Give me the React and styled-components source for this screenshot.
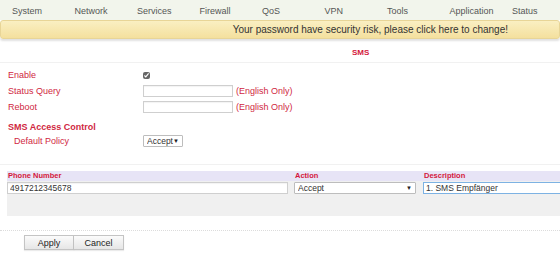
import React from "react";
import styled, { createGlobalStyle } from "styled-components";

const GlobalStyle = createGlobalStyle`
  html, body {
    margin: 0;
    padding: 0;
    background: #fff;
    font-family: "Liberation Sans", Arial, sans-serif;
  }
`;

const menu = ["System", "Network", "Services", "Firewall", "QoS", "VPN", "Tools", "Application", "Status"];

const Page = styled.div`
  width: 560px;
  height: 254px;
  overflow: hidden;
`;

const Nav = styled.div`
  display: flex;
  height: 20px;
  background: #f2f5ec;
`;

const NavItem = styled.div`
  flex: 0 0 62.5px;
  padding-left: 12px;
  box-sizing: border-box;
  font-size: 9px;
  line-height: 22px;
  color: #555;
  white-space: nowrap;
`;

const Banner = styled.div`
  height: 19px;
  box-sizing: border-box;
  background: linear-gradient(#faefc2, #f4e09e);
  border: 1px solid #e8d597;
  border-radius: 3px;
  box-shadow: 0 2px 2px rgba(0, 0, 0, 0.12);
  padding-right: 51px;
  text-align: right;
  font-size: 10px;
  line-height: 17px;
  color: #333;
`;

const Title = styled.div`
  margin-top: 5px;
  height: 18px;
  border-bottom: 1px solid #f1f1f1;
  padding-left: 352px;
  font-size: 8px;
  font-weight: bold;
  line-height: 18px;
  color: #d4173c;
`;

const Form = styled.div`
  padding: 4px 0 0 8px;
  height: 97px;
  border-bottom: 1px solid #f1f1f1;
`;

const Row = styled.div`
  display: flex;
  align-items: center;
  height: ${p => p.$h || 16}px;
  margin-top: ${p => p.$mt || 0}px;
`;

const Label = styled.div`
  width: ${p => (p.$indent ? 129 : 135)}px;
  padding-left: ${p => (p.$indent ? 6 : 0)}px;
  font-size: 9px;
  color: #d0283f;
  font-weight: ${p => (p.$bold ? "bold" : "normal")};
  white-space: nowrap;
`;

const Check = styled.input`
  width: 7px;
  height: 7px;
  margin: 0;
  accent-color: #666;
`;

const TextInput = styled.input`
  display: block;
  box-sizing: border-box;
  width: ${p => p.$w}px;
  height: 12px;
  margin: 0;
  padding: 0 2px;
  border: 1px solid ${p => (p.$focus ? "#7db2e3" : "#cfcfcf")};
  box-shadow: ${p => (p.$focus ? "0 0 2px rgba(80,150,220,0.4)" : "inset 0 1px 1px rgba(0,0,0,0.05)")};
  font-family: "Liberation Sans", Arial, sans-serif;
  font-size: 8.5px;
  color: #333;
  outline: none;
  background: #fff;
`;

const Hint = styled.span`
  margin-left: 3px;
  font-size: 9px;
  color: #d0283f;
`;

const SelectWrap = styled.div`
  position: relative;
  width: ${p => p.$w}px;
  height: 12px;
`;

const Select = styled.select`
  display: block;
  appearance: none;
  box-sizing: border-box;
  width: 100%;
  height: 12px;
  margin: 0;
  padding: 0 0 0 3px;
  border: 1px solid #bdbdbd;
  border-radius: 1px;
  background: #fff;
  font-family: "Liberation Sans", Arial, sans-serif;
  font-size: 8.5px;
  line-height: 10px;
  color: #333;
`;

const Arrow = styled.span`
  position: absolute;
  right: 4px;
  top: 0;
  font-size: 6px;
  line-height: 12px;
  color: #222;
  pointer-events: none;
`;

const Table = styled.div`
  margin: 6px 0 0 7px;
  background: #f0f0f0;
  height: 45px;
`;

const HeadRow = styled.div`
  display: grid;
  grid-template-columns: 287px 129px 1fr;
  background: #e7e4f6;
  height: 10px;
`;

const HeadCell = styled.div`
  padding-left: 1px;
  font-size: 7.5px;
  font-weight: bold;
  line-height: 10px;
  color: #d4173c;
`;

const BodyRow = styled.div`
  display: grid;
  grid-template-columns: 287px 129px 1fr;
  padding-top: 1px;
`;

const Cell = styled.div`
  overflow: hidden;
`;

const Dotted = styled.div`
  margin-top: 14px;
  border-top: 1px dotted #dcdcdc;
`;

const Buttons = styled.div`
  display: flex;
  padding: 4px 0 0 24px;
`;

const Button = styled.button`
  width: 50px;
  height: 15px;
  margin: 0;
  padding: 0;
  border: 1px solid #c4c4c4;
  border-left-width: ${p => (p.$joined ? 0 : 1)}px;
  background: linear-gradient(#fbfbfb, #e6e6e6);
  font-family: "Liberation Sans", Arial, sans-serif;
  font-size: 9px;
  color: #222;
  box-shadow: 0 1px 1px rgba(0, 0, 0, 0.08);
`;

export default function App() {
  return (
    <Page>
      <GlobalStyle />
      <Nav>
        {menu.map(m => (
          <NavItem key={m}>{m}</NavItem>
        ))}
      </Nav>
      <Banner>Your password have security risk, please click here to change!</Banner>
      <Title>SMS</Title>
      <Form>
        <Row>
          <Label>Enable</Label>
          <Check type="checkbox" defaultChecked />
        </Row>
        <Row>
          <Label>Status Query</Label>
          <TextInput $w={90} />
          <Hint>(English Only)</Hint>
        </Row>
        <Row>
          <Label>Reboot</Label>
          <TextInput $w={90} />
          <Hint>(English Only)</Hint>
        </Row>
        <Row $mt={4} $h={15}>
          <Label $bold>SMS Access Control</Label>
        </Row>
        <Row $h={13}>
          <Label $indent>Default Policy</Label>
          <SelectWrap $w={40}>
            <Select defaultValue="Accept">
              <option>Accept</option>
              <option>Drop</option>
            </Select>
            <Arrow>▼</Arrow>
          </SelectWrap>
        </Row>
      </Form>
      <Table>
        <HeadRow>
          <HeadCell>Phone Number</HeadCell>
          <HeadCell>Action</HeadCell>
          <HeadCell>Description</HeadCell>
        </HeadRow>
        <BodyRow>
          <Cell>
            <TextInput $w={281} defaultValue="4917212345678" />
          </Cell>
          <Cell>
            <SelectWrap $w={122}>
              <Select defaultValue="Accept">
                <option>Accept</option>
                <option>Drop</option>
              </Select>
              <Arrow>▼</Arrow>
            </SelectWrap>
          </Cell>
          <Cell>
            <TextInput $w={145} $focus defaultValue="1. SMS Empfänger" />
          </Cell>
        </BodyRow>
      </Table>
      <Dotted />
      <Buttons>
        <Button>Apply</Button>
        <Button $joined>Cancel</Button>
      </Buttons>
    </Page>
  );
}
